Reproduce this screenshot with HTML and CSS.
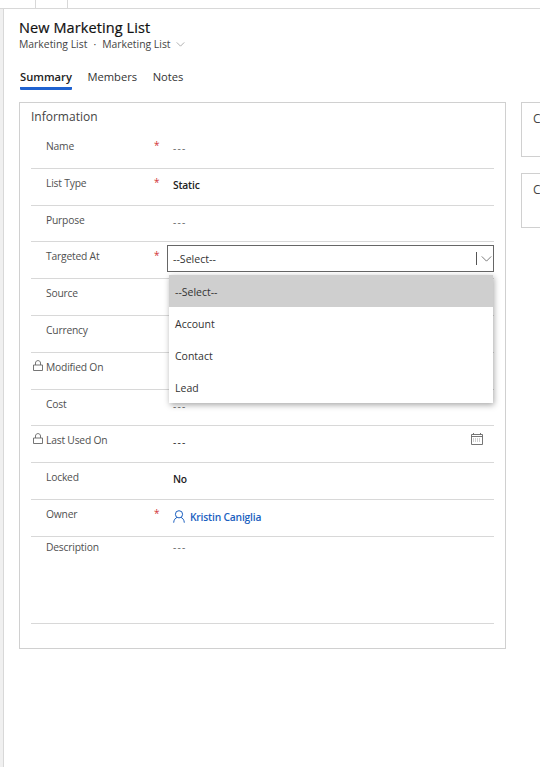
FILE: index.html
```html
<!DOCTYPE html>
<html lang="en">
<head>
<meta charset="UTF-8" />
<title>New Marketing List</title>
<link rel="stylesheet" href="styles.css">
</head>
<body>

<div class="top-bar">
    <span class="top-tab"></span>
    <span class="top-tab"></span>
</div>

<div class="page">
    <div class="header">
        <h1>New Marketing List</h1>
        <div class="crumbs">
            <span>Marketing List</span>
            <span class="dot">·</span>
            <span>Marketing List</span>
            <svg class="crumb-chevron" viewBox="0 0 10 6"><path d="M0.5 0.5 L5 5 L9.5 0.5"/></svg>
        </div>
    </div>

    <div class="tabs">
        <span class="tab selected">Summary</span>
        <span class="tab">Members</span>
        <span class="tab">Notes</span>
    </div>

    <div class="columns">
        <div class="card">
            <h2>Information</h2>

            <div class="row">
                <div class="label">Name</div>
                <div class="req">*</div>
                <div class="value empty">---</div>
            </div>
            <div class="row">
                <div class="label">List Type</div>
                <div class="req">*</div>
                <div class="value bold">Static</div>
            </div>
            <div class="row">
                <div class="label">Purpose</div>
                <div class="req"></div>
                <div class="value empty">---</div>
            </div>
            <div class="row select-row">
                <div class="label">Targeted At</div>
                <div class="req">*</div>
                <div class="select-box">
                    <span>--Select--</span>
                    <span class="select-bar"></span>
                    <svg class="select-chevron" viewBox="0 0 12 7"><path d="M0.5 0.5 L6 6 L11.5 0.5"/></svg>
                </div>
                <div class="select-menu">
                    <div class="option active">--Select--</div>
                    <div class="option">Account</div>
                    <div class="option">Contact</div>
                    <div class="option">Lead</div>
                </div>
            </div>
            <div class="row">
                <div class="label">Source</div>
                <div class="req"></div>
            </div>
            <div class="row">
                <div class="label">Currency</div>
                <div class="req"></div>
            </div>
            <div class="row">
                <div class="label">
                    <svg class="lock" viewBox="0 0 10 11"><path d="M0.5 5 H9.5 V10.5 H0.5 Z M2.5 5 V3 C2.5 -0.2 7.5 -0.2 7.5 3 V5"/></svg>
                    Modified On
                </div>
                <div class="req"></div>
            </div>
            <div class="row">
                <div class="label">Cost</div>
                <div class="req"></div>
                <div class="value empty">---</div>
            </div>
            <div class="row">
                <div class="label">
                    <svg class="lock" viewBox="0 0 10 11"><path d="M0.5 5 H9.5 V10.5 H0.5 Z M2.5 5 V3 C2.5 -0.2 7.5 -0.2 7.5 3 V5"/></svg>
                    Last Used On
                </div>
                <div class="req"></div>
                <div class="value dark">---</div>
                <svg class="calendar" viewBox="0 0 12 12">
                    <path d="M0.5 1.5 H11.5 V11.5 H0.5 Z M0.5 3.5 H11.5 M2.5 0 V1.5 M9.5 0 V1.5"/>
                    <path class="cal-days" d="M2 6 H10 M2 8 H10"/>
                </svg>
            </div>
            <div class="row">
                <div class="label">Locked</div>
                <div class="req"></div>
                <div class="value bold dark">No</div>
            </div>
            <div class="row">
                <div class="label">Owner</div>
                <div class="req">*</div>
                <div class="value owner">
                    <svg class="person" viewBox="0 0 12 13"><path d="M6 0.7 A3.6 3.6 0 1 0 6 7.9 A3.6 3.6 0 1 0 6 0.7 Z M0.7 12.7 C0.7 9.8 2.6 7.9 4 7.4 M11.3 12.7 C11.3 9.8 9.4 7.9 8 7.4"/></svg>
                    <span>Kristin Caniglia</span>
                </div>
            </div>
            <div class="row description">
                <div class="label">Description</div>
                <div class="req"></div>
                <div class="value empty">---</div>
            </div>
        </div>

        <div class="side">
            <div class="side-card first">C</div>
            <div class="side-card">C</div>
        </div>
    </div>
</div>

</body>
</html>
```

FILE: styles.css
```css
:root {
    --font-family: 'Open Sans', 'Noto Sans', Arial, sans-serif;
    --text-color: #333;
    --label-color: #505050;
    --border-color: #d0d0d0;
    --line-color: #d8d8d8;
    --link-color: #1b5fbf;
}

html, body {
    height: 100%;
}

body {
    font-family: var(--font-family);
    margin: 0;
    background: #fff;
    color: var(--text-color);
    overflow: hidden;
}

.top-bar {
    display: flex;
    height: 8px;
    padding-left: 35px;
    border-bottom: 1px solid var(--line-color);
}

.top-tab {
    width: 31px;
    border-left: 1px solid var(--line-color);
}

.page {
    height: 758px;
    margin-left: 3px;
    padding-left: 15px;
    border-left: 1px solid var(--line-color);
    box-shadow: -3px 0 0 #f0f0f0;
}

.header {
    padding-top: 11px;
}

h1 {
    margin: 0;
    font-size: 14.5px;
    letter-spacing: 0.1px;
    line-height: 16px;
    font-weight: 400;
    color: #111;
    -webkit-text-stroke: 0.2px #111;
}

.crumbs {
    display: flex;
    align-items: center;
    gap: 6px;
    margin-top: 1px;
    font-size: 10.4px;
    line-height: 14px;
    color: #444;
}

.crumb-chevron {
    width: 9px;
    height: 5px;
    margin-left: -1px;
    fill: none;
    stroke: #888;
    stroke-width: 0.8;
}

.tabs {
    display: flex;
    gap: 15.5px;
    margin-top: 17px;
    padding-left: 1px;
    height: 34px;
}

.tab {
    height: 19px;
    font-size: 11.2px;
    line-height: 17px;
    color: #333;
}

.tab.selected {
    font-weight: 600;
    color: #222;
    border-bottom: 3px solid #1f62d0;
    border-radius: 1px;
}

.columns {
    display: flex;
    gap: 15px;
}

.card {
    box-sizing: border-box;
    flex-shrink: 0;
    width: 487px;
    height: 547px;
    padding: 0 11px;
    border: 1px solid var(--border-color);
}

h2 {
    margin: 0;
    height: 29px;
    font-size: 12px;
    line-height: 28px;
    font-weight: 400;
    color: #444;
}

.row {
    position: relative;
    box-sizing: border-box;
    display: flex;
    height: 36.8px;
    padding-left: 15px;
    border-bottom: 1px solid var(--line-color);
}

.label {
    position: relative;
    width: 108px;
    padding-top: 5px;
    font-size: 10.3px;
    letter-spacing: -0.2px;
    line-height: 18px;
    color: var(--label-color);
}

.lock {
    position: absolute;
    left: -13px;
    top: 7px;
    width: 10px;
    height: 11px;
    fill: none;
    stroke: #666;
    stroke-width: 0.9;
}

.req {
    width: 19px;
    padding-top: 5px;
    font-size: 10px;
    line-height: 16px;
    color: #d13438;
}

.value {
    padding-top: 7px;
    font-size: 10.3px;
    letter-spacing: -0.2px;
    line-height: 18px;
    color: #666;
}

.value.empty, .value.dark {
    letter-spacing: 1.2px;
}

.value.dark {
    color: #222;
}

.value.bold {
    font-weight: 600;
    letter-spacing: -0.2px;
    color: #222;
}

.value.owner {
    display: flex;
    align-items: flex-start;
    gap: 5px;
    padding-top: 8px;
    font-weight: 600;
    color: var(--link-color);
}

.person {
    width: 12px;
    height: 13px;
    margin-top: 2px;
    fill: none;
    stroke: var(--link-color);
    stroke-width: 1;
}

.calendar {
    position: absolute;
    right: 11px;
    top: 7px;
    width: 12px;
    height: 12px;
    fill: none;
    stroke: #666;
    stroke-width: 0.9;
}

.cal-days {
    stroke: #999;
    stroke-dasharray: 1 1;
}

.select-box {
    box-sizing: border-box;
    display: flex;
    align-items: center;
    flex: 1;
    height: 27px;
    margin: 3px 0 0 -6px;
    padding: 0 0 0 5px;
    border: 1px solid #666;
    font-size: 10.6px;
    color: #333;
}

.select-bar {
    width: 1px;
    height: 13px;
    margin-left: auto;
    background: #555;
}

.select-chevron {
    width: 11px;
    height: 6px;
    margin: 0 1px 0 4px;
    fill: none;
    stroke: #555;
    stroke-width: 0.9;
}

.select-menu {
    position: absolute;
    left: 138px;
    right: 1px;
    top: 33px;
    z-index: 2;
    background: #fff;
    box-shadow: 1px 2px 6px rgba(0, 0, 0, 0.35);
}

.option {
    height: 32px;
    padding-left: 6px;
    font-size: 10.5px;
    line-height: 34px;
    color: #333;
}

.option.active {
    background: #cfcfcf;
}

.description {
    height: 87px;
}

.description .label {
    padding-top: 1px;
}

.description .value {
    padding-top: 1px;
}

.side {
    flex: 1;
}

.side-card {
    box-sizing: border-box;
    width: 40px;
    height: 55px;
    padding: 7px 0 0 11px;
    border: 1px solid var(--border-color);
    font-size: 12px;
    line-height: 18px;
    color: #444;
}

.side-card.first {
    margin-bottom: 16px;
}
```
